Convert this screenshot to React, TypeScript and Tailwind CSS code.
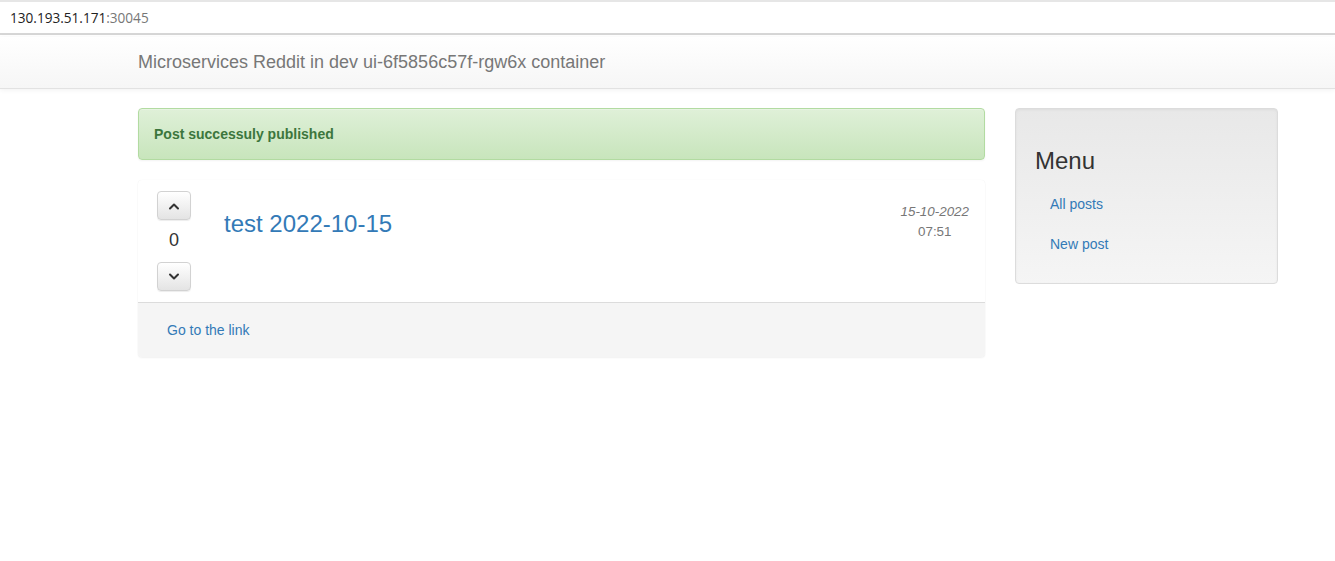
import React from 'react';

const Chevron = ({ dir }: { dir: 'up' | 'down' }) => (
  <svg width="12" height="8" viewBox="0 0 12 8" className="block">
    {dir === 'up' ? (
      <polyline points="2,6.5 6,2.5 10,6.5" fill="none" stroke="#333" strokeWidth="2" strokeLinecap="round" strokeLinejoin="round" />
    ) : (
      <polyline points="2,1.5 6,5.5 10,1.5" fill="none" stroke="#333" strokeWidth="2" strokeLinecap="round" strokeLinejoin="round" />
    )}
  </svg>
);

const VoteButton = ({ dir }: { dir: 'up' | 'down' }) => (
  <button className="flex h-[29px] w-[34px] items-center justify-center rounded-[4px] border border-[#d2d2d2] bg-gradient-to-b from-white to-[#e4e4e4] shadow-[inset_0_1px_0_rgba(255,255,255,0.15),0_1px_1px_rgba(0,0,0,0.075)]">
    <Chevron dir={dir} />
  </button>
);

export default function App() {
  return (
    <div className="min-h-[561px] bg-white font-['Liberation_Sans',Arial,sans-serif] text-[14px] text-[#333]">
      {/* Address bar */}
      <div className="h-[35px] border-t-2 border-b-2 border-t-[#e6e6e6] border-b-[#d6d6d6] bg-white pl-[10px] font-['Open_Sans','Noto_Sans',sans-serif] text-[13.6px] leading-[31px]">
        <span className="text-[#222]">130.193.51.171</span>
        <span className="text-[#777]">:30045</span>
      </div>

      {/* Navbar */}
      <div className="mt-[2px] h-[52px] border-b border-[#e2e2e2] bg-gradient-to-b from-white to-[#f6f6f6] shadow-[0_1px_5px_rgba(0,0,0,0.06)]">
        <div className="ml-[138px] pt-[13px] text-[18px] leading-[24px] text-[#777]">
          Microservices Reddit in dev ui-6f5856c57f-rgw6x container
        </div>
      </div>

      {/* Content */}
      <div className="ml-[138px] mt-[19px] flex w-[1140px] gap-[30px]">
        <div className="w-[847px]">
          <div className="h-[52px] rounded-[4px] border border-[#b2dba1] bg-gradient-to-b from-[#dff0d8] to-[#c8e5bc] px-[15px] text-[14px] font-bold leading-[50px] text-[#3c763d] shadow-[inset_0_1px_0_rgba(255,255,255,0.25),0_1px_2px_rgba(0,0,0,0.05)]">
            Post successuly published
          </div>

          <div className="mt-[20px] rounded-[4px] bg-white shadow-[0_1px_2px_rgba(0,0,0,0.05),0_0_1px_rgba(0,0,0,0.08)]">
            <div className="flex h-[122px] pt-[11px]">
              <div className="ml-[19px] flex w-[34px] flex-col items-center">
                <VoteButton dir="up" />
                <div className="h-[42px] text-[18px] leading-[40px] text-[#333]">0</div>
                <VoteButton dir="down" />
              </div>
              <div className="ml-[33px] flex-1 pt-[18px]">
                <a className="text-[24px] leading-[30px] text-[#337ab7]">test 2022-10-15</a>
              </div>
              <div className="mr-[16px] flex flex-col items-center pt-[11px] text-[13.4px] leading-[20px] text-[#777]">
                <span className="italic">15-10-2022</span>
                <span>07:51</span>
              </div>
            </div>
            <div className="h-[55px] rounded-b-[4px] border-t border-[#dcdcdc] bg-[#f5f5f5] pl-[29px] leading-[54px]">
              <a className="text-[14px] text-[#337ab7]">Go to the link</a>
            </div>
          </div>
        </div>

        <div className="w-[263px]">
          <div className="h-[176px] rounded-[4px] border border-[#dcdcdc] bg-gradient-to-b from-[#e8e8e8] to-[#f5f5f5] px-[19px] shadow-[inset_0_1px_3px_rgba(0,0,0,0.05),0_1px_0_rgba(255,255,255,0.1)]">
            <h3 className="mt-[39px] text-[24px] leading-[26px] text-[#333]">Menu</h3>
            <ul className="mt-[10px]">
              <li className="px-[15px] py-[10px] leading-[20px]">
                <a className="text-[#337ab7]">All posts</a>
              </li>
              <li className="px-[15px] py-[10px] leading-[20px]">
                <a className="text-[#337ab7]">New post</a>
              </li>
            </ul>
          </div>
        </div>
      </div>
    </div>
  );
}
